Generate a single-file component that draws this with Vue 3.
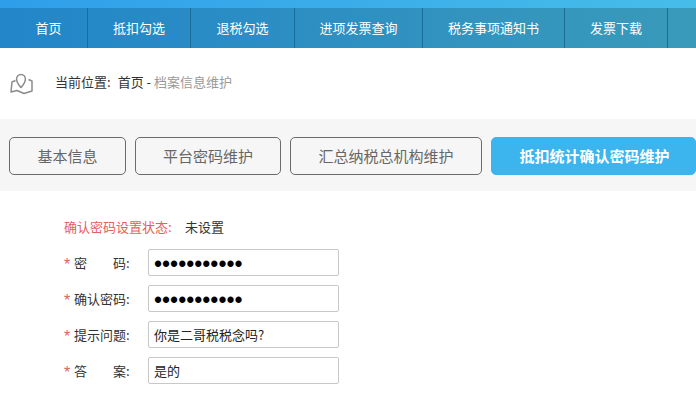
<script setup>
const nav = [
  { label: '首页', w: 88 },
  { label: '抵扣勾选', w: 103 },
  { label: '退税勾选', w: 104 },
  { label: '进项发票查询', w: 128 },
  { label: '税务事项通知书', w: 142 },
  { label: '发票下载', w: 103 },
  { label: '数据', w: 100 }
]
const tabs = [
  { label: '基本信息', w: 117 },
  { label: '平台密码维护', w: 146 },
  { label: '汇总纳税总机构维护', w: 192 },
  { label: '抵扣统计确认密码维护', w: 205, active: true }
]
const rows = [
  { label: '密　　码:', type: 'password', value: '12345678901' },
  { label: '确认密码:', type: 'password', value: '12345678901' },
  { label: '提示问题:', type: 'text', value: '你是二哥税税念吗?' },
  { label: '答　　案:', type: 'text', value: '是的' }
]
</script>

<template>
  <div class="page">
    <div class="topbar"></div>
    <nav class="nav">
      <a
        v-for="(item, i) in nav"
        :key="item.label"
        class="nav-item"
        :class="{ first: i === 0 }"
        :style="{ flexBasis: item.w + 'px' }"
      >{{ item.label }}</a>
    </nav>
    <div class="crumb">
      <svg class="crumb-icon" width="24" height="24" viewBox="0 0 24 24" fill="none">
        <path d="M11 15.5 C9 13 6.6 10.8 6.6 7 C6.6 4.4 8.5 2.4 11 2.4 C13.5 2.4 15.4 4.4 15.4 7 C15.4 10.8 13 13 11 15.5 Z" />
        <path d="M5.5 8.5 L2 10 L1 20 L7 18.5 L14 21.5 L22 19 L22 9 L18.5 7.5" />
      </svg>
      <span class="crumb-text"><span class="crumb-lead">当前位置:</span>首页 - <span class="crumb-current">档案信息维护</span></span>
    </div>
    <div class="tabs">
      <button
        v-for="tab in tabs"
        :key="tab.label"
        type="button"
        class="tab"
        :class="{ active: tab.active }"
        :style="{ flexBasis: tab.w + 'px' }"
      >{{ tab.label }}</button>
    </div>
    <form class="form">
      <div class="status">
        <span class="status-label">确认密码设置状态:</span>
        <span class="status-value">未设置</span>
      </div>
      <div v-for="row in rows" :key="row.label" class="row">
        <span class="star">*</span>
        <label class="label">{{ row.label }}</label>
        <input
          class="input"
          :class="{ secret: row.type === 'password' }"
          :type="row.type"
          :value="row.value"
          readonly
        />
      </div>
    </form>
  </div>
</template>

<style>
html, body { margin: 0; background: #fff; overflow: hidden; }
</style>

<style scoped>
.page {
  width: 696px;
  height: 405px;
  overflow: hidden;
  font-family: "Noto Sans CJK SC", "Liberation Sans", sans-serif;
  font-size: 13px;
}
.topbar {
  height: 8px;
  background: linear-gradient(90deg, #2f9eea, #46bde9);
}
.nav {
  display: flex;
  height: 40px;
  background: linear-gradient(90deg, #2286c9, #3a9aba);
}
.nav-item {
  flex: 0 0 auto;
  box-sizing: border-box;
  display: flex;
  align-items: center;
  justify-content: center;
  padding-bottom: 2px;
  border-right: 1px solid #1b6c9b;
  color: #fff;
  font-size: 13px;
}
.nav-item.first { padding-left: 10px; }
.crumb {
  display: flex;
  align-items: center;
  height: 71px;
  padding-left: 10px;
  box-sizing: border-box;
}
.crumb-icon {
  flex: none;
  stroke: #8c8c8c;
  stroke-width: 1.5;
  stroke-linejoin: round;
}
.crumb-text {
  margin-left: 21px;
  padding-bottom: 4px;
  color: #333;
  font-size: 13px;
}
.crumb-lead { margin-right: 7px; }
.crumb-current { color: #999; }
.tabs {
  display: flex;
  gap: 9px;
  box-sizing: border-box;
  align-items: center;
  height: 72px;
  padding: 2px 0 0 9px;
  background: #f6f6f6;
  overflow: hidden;
}
.tab {
  flex: 0 0 auto;
  box-sizing: border-box;
  height: 38px;
  padding: 0 0 2px;
  border: 1px solid #6b6b6b;
  border-radius: 5px;
  background: transparent;
  color: #666;
  font-family: inherit;
  font-size: 15px;
}
.tab.active {
  padding-left: 2px;
  border-color: #3cb4ee;
  background: #3cb4ee;
  color: #fff;
  font-weight: 700;
}
.form {
  padding: 16px 0 0 64px;
}
.status {
  display: flex;
  align-items: center;
  height: 38px;
  margin-bottom: 4px;
}
.status-label {
  width: 121px;
  color: #e4605f;
}
.status-value { color: #333; }
.row {
  display: flex;
  align-items: center;
  height: 27px;
  margin-bottom: 9px;
}
.star {
  width: 10px;
  padding-top: 4px;
  color: #e4605f;
  font-family: "Liberation Sans", sans-serif;
  font-size: 16px;
  line-height: 16px;
}
.label {
  width: 74px;
  color: #333;
}
.input {
  box-sizing: border-box;
  width: 191px;
  height: 27px;
  padding: 0 5px;
  border: 1px solid #c8c8c8;
  border-radius: 2px;
  outline: none;
  color: #222;
  font-family: inherit;
  font-size: 13px;
}
.input.secret {
  padding-top: 4px;
  color: #000;
  font-family: "Liberation Sans", sans-serif;
  font-size: 23px;
}
</style>
